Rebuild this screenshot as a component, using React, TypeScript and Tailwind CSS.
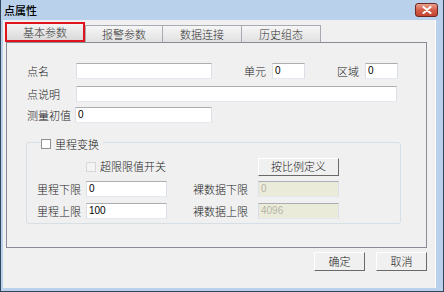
const cjk = { fontFamily: '"Noto Sans CJK SC", "Liberation Sans", sans-serif' };

function Field({ w, value = "", disabled = false }: { w: string; value?: string; disabled?: boolean }) {
  return (
    <div
      className={`${w} h-[16px] border border-t-[#abadb3] border-l-[#dbdfe6] border-r-[#dbdfe6] border-b-[#e3e9ef] pl-[2px] text-[10px] leading-[13px] ${
        disabled ? "bg-[#ebebda] text-[#b5b5a8]" : "bg-white text-black"
      }`}
      style={{ fontFamily: '"Liberation Sans", sans-serif' }}
    >
      {value}
    </div>
  );
}

function Btn({ w, children }: { w: string; children: string }) {
  return (
    <div
      className={`${w} h-[18px] flex items-center justify-center bg-[#f0f0f0] border border-t-white border-l-white border-r-[#696969] border-b-[#696969] text-[11px] font-light text-[#222]`}
    >
      {children}
    </div>
  );
}

export default function App() {
  return (
    <div
      className="w-[444px] h-[292px] flex flex-col bg-[#b9d1ea] border-l border-r border-b border-[#33475c] overflow-hidden"
      style={cjk}
    >
      {/* title bar */}
      <div className="h-[20px] flex items-center justify-between pl-[3px] pr-[5px]">
        <span className="text-[11px] font-medium text-black">点属性</span>
        <div className="w-[23px] h-[14px] rounded-[3px] border border-[#6d2a22] bg-gradient-to-b from-[#e8a192] via-[#d45e48] to-[#c7452f] flex items-center justify-center">
          <svg width="10" height="8" viewBox="0 0 10 8">
            <path d="M1.5 1 L8.5 7 M8.5 1 L1.5 7" stroke="white" strokeWidth="2" strokeLinecap="round" />
          </svg>
        </div>
      </div>

      {/* body */}
      <div className="flex-1 mr-[7px] mb-[3px] ml-[2px] bg-[#f0f0f0] border-r border-white pl-[3px] pt-[3px] flex flex-col">
        {/* tabs */}
        <div className="h-[19px] flex items-end -ml-[1px] text-[11px] font-light text-[#333]">
          <div className="w-[80px] h-[20px] border-2 border-[#e0141c] bg-gradient-to-b from-[#f4f4f4] to-[#d9d9d9] flex items-center justify-center">
            基本参数
          </div>
          <div className="w-[78px] h-[17px] border border-b-0 border-[#a8abb2] bg-gradient-to-b from-[#f6f6f6] to-[#e1e1e1] flex items-center justify-center">
            报警参数
          </div>
          <div className="w-[79px] h-[17px] border border-l-0 border-b-0 border-[#a8abb2] bg-gradient-to-b from-[#f6f6f6] to-[#e1e1e1] flex items-center justify-center">
            数据连接
          </div>
          <div className="w-[79px] h-[17px] border border-l-0 border-b-0 border-[#a8abb2] bg-gradient-to-b from-[#f6f6f6] to-[#e1e1e1] flex items-center justify-center">
            历史组态
          </div>
        </div>

        {/* panel */}
        <div className="w-[421px] h-[206px] border border-[#898c95] bg-[#f0f0f0] flex flex-col pl-[20px] pt-[20px] text-[11px] font-light text-[#1a1a1a]">
          <div className="flex items-center h-[16px]">
            <span className="w-[49px]">点名</span>
            <Field w="w-[136px]" />
            <span className="ml-[32px] w-[28px]">单元</span>
            <Field w="w-[33px]" value="0" />
            <span className="ml-[32px] w-[28px]">区域</span>
            <Field w="w-[33px]" value="0" />
          </div>
          <div className="flex items-center h-[16px] mt-[7px]">
            <span className="w-[49px]">点说明</span>
            <Field w="w-[321px]" />
          </div>
          <div className="flex items-center h-[16px] mt-[5px]">
            <span className="w-[48px]">测量初值</span>
            <Field w="w-[137px]" value="0" />
          </div>

          {/* group box */}
          <div className="relative w-[375px] h-[82px] mt-[19px] -ml-[1px] border border-[#d5dfe5] rounded-[3px] flex flex-col pt-[15px]">
            <div className="absolute -top-[7px] left-[13px] flex items-center gap-[4px] bg-[#f0f0f0] pl-[1px] pr-[4px]">
              <div className="w-[10px] h-[10px] border border-[#8e8f8f] bg-white" />
              <span>里程变换</span>
            </div>
            <div className="flex items-center h-[17px] pl-[59px]">
              <div className="w-[10px] h-[10px] border border-[#d8d8d8] bg-[#f4f4f4]" />
              <span className="ml-[4px] w-[158px]">超限限值开关</span>
              <Btn w="w-[81px]">按比例定义</Btn>
            </div>
            <div className="flex items-center h-[16px] mt-[6px] pl-[10px]">
              <span className="w-[49px]">里程下限</span>
              <Field w="w-[81px]" value="0" />
              <span className="ml-[26px] w-[65px]">裸数据下限</span>
              <Field w="w-[81px]" value="0" disabled />
            </div>
            <div className="flex items-center h-[16px] mt-[6px] pl-[10px]">
              <span className="w-[49px]">里程上限</span>
              <Field w="w-[81px]" value="100" />
              <span className="ml-[26px] w-[65px]">裸数据上限</span>
              <Field w="w-[81px]" value="4096" disabled />
            </div>
          </div>
        </div>

        {/* footer buttons */}
        <div className="flex justify-end gap-[11px] pr-[8px] mt-[4px]">
          <Btn w="w-[51px] h-[19px]">确定</Btn>
          <Btn w="w-[51px] h-[19px]">取消</Btn>
        </div>
      </div>
    </div>
  );
}
